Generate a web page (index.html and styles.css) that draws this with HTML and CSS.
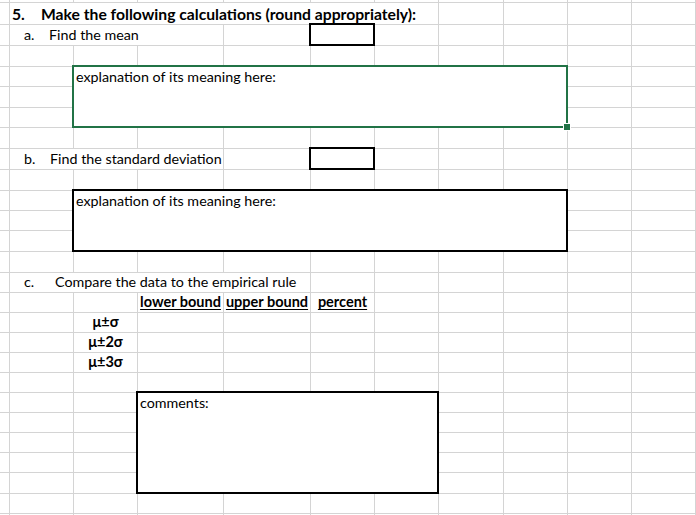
FILE: index.html
```html
<!DOCTYPE html>
<html lang="en">
<head>
<meta charset="utf-8">
<title>Calculations</title>
<link rel="stylesheet" href="styles.css">
</head>
<body>
<div class="sheet">
  <!-- r1 -->
  <div class="c"></div><div class="c"></div><div class="c"></div><div class="c"></div><div class="c"></div><div class="c"></div><div class="c"></div><div class="c"></div><div class="c"></div><div class="c"></div><div class="c"></div>
  <!-- r2 -->
  <div class="c"></div>
  <div class="c t s6 bold title"><span class="num">5.</span><span>Make the following calculations (round appropriately):</span></div>
  <div class="c"></div><div class="c"></div><div class="c"></div><div class="c"></div>
  <!-- r3 -->
  <div class="c"></div>
  <div class="c t s3 item"><span class="lbl la">a.</span><span>Find the mean</span></div>
  <div class="c"></div>
  <div class="c box"></div>
  <div class="c"></div><div class="c"></div><div class="c"></div><div class="c"></div><div class="c"></div>
  <!-- r4 -->
  <div class="c"></div><div class="c"></div><div class="c"></div><div class="c"></div><div class="c"></div><div class="c"></div><div class="c"></div><div class="c"></div><div class="c"></div><div class="c"></div><div class="c"></div>
  <!-- r5 -->
  <div class="c"></div><div class="c"></div>
  <div class="c merged s7 r3 sel"><span>explanation of its meaning here:</span><i class="handle"></i></div>
  <div class="c"></div><div class="c"></div>
  <!-- r6 -->
  <div class="c"></div><div class="c"></div><div class="c"></div><div class="c"></div>
  <!-- r7 -->
  <div class="c"></div><div class="c"></div><div class="c"></div><div class="c"></div>
  <!-- r8 -->
  <div class="c"></div><div class="c"></div><div class="c"></div><div class="c"></div><div class="c"></div><div class="c"></div><div class="c"></div><div class="c"></div><div class="c"></div><div class="c"></div><div class="c"></div>
  <!-- r9 -->
  <div class="c"></div>
  <div class="c t s3 item"><span class="lbl lb">b.</span><span>Find the standard deviation</span></div>
  <div class="c"></div>
  <div class="c box"></div>
  <div class="c"></div><div class="c"></div><div class="c"></div><div class="c"></div><div class="c"></div>
  <!-- r10 -->
  <div class="c"></div><div class="c"></div><div class="c"></div><div class="c"></div><div class="c"></div><div class="c"></div><div class="c"></div><div class="c"></div><div class="c"></div><div class="c"></div><div class="c"></div>
  <!-- r11 -->
  <div class="c"></div><div class="c"></div>
  <div class="c merged s7 r3 box"><span>explanation of its meaning here:</span></div>
  <div class="c"></div><div class="c"></div>
  <!-- r12 -->
  <div class="c"></div><div class="c"></div><div class="c"></div><div class="c"></div>
  <!-- r13 -->
  <div class="c"></div><div class="c"></div><div class="c"></div><div class="c"></div>
  <!-- r14 -->
  <div class="c"></div><div class="c"></div><div class="c"></div><div class="c"></div><div class="c"></div><div class="c"></div><div class="c"></div><div class="c"></div><div class="c"></div><div class="c"></div><div class="c"></div>
  <!-- r15 -->
  <div class="c"></div>
  <div class="c t s4 item"><span class="lbl lc">c.</span><span>Compare the data to the empirical rule</span></div>
  <div class="c"></div><div class="c"></div><div class="c"></div><div class="c"></div><div class="c"></div><div class="c"></div>
  <!-- r16 -->
  <div class="c"></div><div class="c"></div><div class="c"></div>
  <div class="c t center bold"><u>lower bound</u></div>
  <div class="c t center bold"><u>upper bound</u></div>
  <div class="c t center bold"><u>percent</u></div>
  <div class="c"></div><div class="c"></div><div class="c"></div><div class="c"></div><div class="c"></div>
  <!-- r17 -->
  <div class="c"></div><div class="c"></div>
  <div class="c t center bold">μ±σ</div>
  <div class="c"></div><div class="c"></div><div class="c"></div><div class="c"></div><div class="c"></div><div class="c"></div><div class="c"></div><div class="c"></div>
  <!-- r18 -->
  <div class="c"></div><div class="c"></div>
  <div class="c t center bold">μ±2σ</div>
  <div class="c"></div><div class="c"></div><div class="c"></div><div class="c"></div><div class="c"></div><div class="c"></div><div class="c"></div><div class="c"></div>
  <!-- r19 -->
  <div class="c"></div><div class="c"></div>
  <div class="c t center bold">μ±3σ</div>
  <div class="c"></div><div class="c"></div><div class="c"></div><div class="c"></div><div class="c"></div><div class="c"></div><div class="c"></div><div class="c"></div>
  <!-- r20 -->
  <div class="c"></div><div class="c"></div><div class="c"></div><div class="c"></div><div class="c"></div><div class="c"></div><div class="c"></div><div class="c"></div><div class="c"></div><div class="c"></div><div class="c"></div>
  <!-- r21 -->
  <div class="c"></div><div class="c"></div><div class="c"></div>
  <div class="c merged s4 r5 box"><span>comments:</span></div>
  <div class="c"></div><div class="c"></div><div class="c"></div><div class="c"></div>
  <!-- r22 -->
  <div class="c"></div><div class="c"></div><div class="c"></div><div class="c"></div><div class="c"></div><div class="c"></div><div class="c"></div>
  <!-- r23 -->
  <div class="c"></div><div class="c"></div><div class="c"></div><div class="c"></div><div class="c"></div><div class="c"></div><div class="c"></div>
  <!-- r24 -->
  <div class="c"></div><div class="c"></div><div class="c"></div><div class="c"></div><div class="c"></div><div class="c"></div><div class="c"></div>
  <!-- r25 -->
  <div class="c"></div><div class="c"></div><div class="c"></div><div class="c"></div><div class="c"></div><div class="c"></div><div class="c"></div>
  <!-- r26 -->
  <div class="c"></div><div class="c"></div><div class="c"></div><div class="c"></div><div class="c"></div><div class="c"></div><div class="c"></div><div class="c"></div><div class="c"></div><div class="c"></div><div class="c"></div>
  <!-- r27 -->
  <div class="c"></div><div class="c"></div><div class="c"></div><div class="c"></div><div class="c"></div><div class="c"></div><div class="c"></div><div class="c"></div><div class="c"></div><div class="c"></div><div class="c"></div>
</div>
</body>
</html>
```
FILE: styles.css
```css
html, body {
  margin: 0;
  padding: 0;
  background: #fff;
  overflow: hidden;
}

.sheet {
  display: grid;
  grid-template-columns: 10px 64px 64px 86px 87px 64px 64px 65px 64px 64px 64px;
  grid-template-rows: 3px 22px 21px 21px 20px 21px 20px 21px 21px 21px 20px 20px 21px 21px repeat(10, 20px) 21px 20px 2px;
  width: 696px;
  font-family: "Lato", "Liberation Sans", sans-serif;
  font-size: 14.3px;
  line-height: 18px;
  color: #000;
}

.c {
  box-sizing: border-box;
  border-right: 1px solid #d4d4d4;
  border-bottom: 1px solid #d4d4d4;
  min-width: 0;
  white-space: nowrap;
}

.t {
  display: flex;
  align-items: flex-end;
  padding-bottom: 1px;
}

.s3 { grid-column: span 3; }
.s4 { grid-column: span 4; }
.s6 { grid-column: span 6; }
.s7 { grid-column: span 7; }
.r3 { grid-row: span 3; }
.r5 { grid-row: span 5; }

.bold {
  font-weight: 700;
  font-size: 14.5px;
}

.title {
  font-size: 15.7px;
}

.center { justify-content: center; }

.num {
  display: inline-block;
  width: 29px;
  padding-left: 2px;
}

.item { padding-left: 14px; }

.lbl { display: inline-block; }
.la { width: 25px; }
.lb { width: 26px; }
.lc { width: 31px; }

u {
  text-decoration-thickness: 1px;
  text-underline-offset: 2px;
}

.box {
  border: 2px solid #000;
  margin: -2px 0 0 -2px;
}

.merged {
  padding: 1px 0 0 2px;
  position: relative;
}

.sel {
  border: 2px solid #217346;
  margin: -2px 0 0 -2px;
}

.handle {
  position: absolute;
  right: -5px;
  bottom: -5px;
  width: 6px;
  height: 6px;
  background: #217346;
  border: 1px solid #fff;
}
```
